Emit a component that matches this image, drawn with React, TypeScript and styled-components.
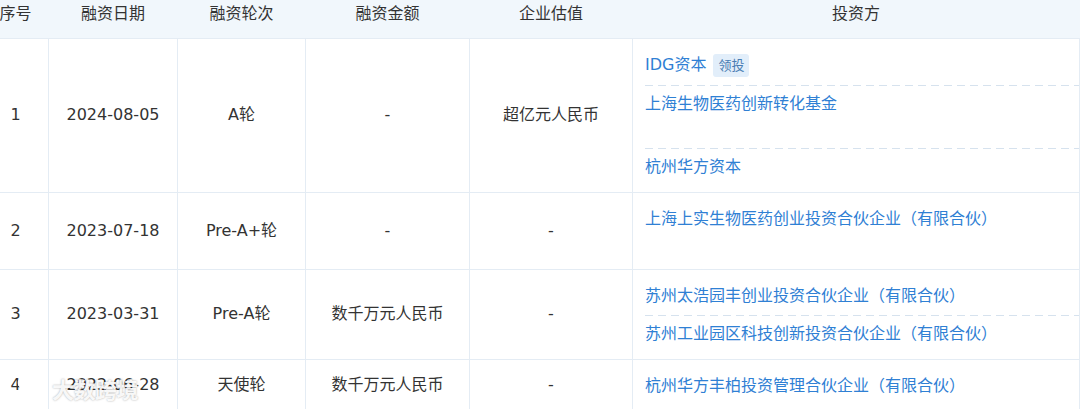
import React, { FC } from "react";
import styled, { createGlobalStyle } from "styled-components";

const GlobalStyle = createGlobalStyle`
  html, body {
    margin: 0;
    padding: 0;
    background: #fff;
  }
  body {
    font-family: "DejaVu Sans", "Noto Sans CJK SC", sans-serif;
    overflow: hidden;
  }
`;

const Page = styled.div`
  position: relative;
  width: 1080px;
  height: 409px;
  overflow: hidden;
`;

const Table = styled.table`
  margin-left: -18px;
  width: 1097px;
  table-layout: fixed;
  border-collapse: collapse;
  font-size: 16px;
  color: #333;
`;

const HeadCell = styled.th`
  box-sizing: border-box;
  height: 38px;
  padding: 3px 0 0;
  vertical-align: top;
  font-weight: normal;
  line-height: 22px;
  text-align: center;
  background: #f1f7fc;
  border-bottom: 1px solid #e4ecf4;
`;

const Cell = styled.td`
  padding: 0;
  text-align: center;
  vertical-align: middle;
  line-height: 22px;
  border: 1px solid #e4ecf4;
`;

const InvestorCell = styled(Cell)`
  padding: 7px 0 6px 12px;
  text-align: left;
`;

const InvestorItem = styled.div<{ $first: boolean }>`
  padding: 8px 0;
  background: ${p =>
    p.$first
      ? "none"
      : "repeating-linear-gradient(to right, #d6e2ee 0 8px, transparent 8px 13px) top left / 100% 1px no-repeat"};
`;

const InvestorLine = styled.div`
  display: flex;
  align-items: center;
  gap: 7px;
  min-height: 22px;
`;

const InvestorName = styled.a`
  color: #2f80d4;
  text-decoration: none;
  white-space: nowrap;
`;

const LeadTag = styled.span`
  display: inline-block;
  height: 23px;
  line-height: 23px;
  padding: 0 5px;
  border-radius: 3px;
  font-size: 13px;
  color: #4a7db3;
  background: #e2eefa;
`;

const EmptyNote = styled.div`
  height: 25px;
`;

const Watermark = styled.div`
  position: absolute;
  left: 4px;
  bottom: 5px;
  display: flex;
  align-items: center;
  gap: 4px;
  color: rgba(255, 255, 255, 0.92);
  font-family: "Noto Sans CJK SC", sans-serif;
  font-size: 22px;
  font-weight: bold;
  letter-spacing: -0.5px;
  text-shadow: 0 0 2px rgba(0, 0, 0, 0.35);
  pointer-events: none;
`;

type Investor = {
  name: string;
  lead?: boolean;
  note?: boolean;
};

type Round = {
  no: number;
  date: string;
  round: string;
  amount: string;
  valuation: string;
  investors: Investor[];
};

const columns = [
  { title: "序号", width: 66 },
  { title: "融资日期", width: 129 },
  { title: "融资轮次", width: 128 },
  { title: "融资金额", width: 164 },
  { title: "企业估值", width: 163 },
  { title: "投资方", width: 447 }
];

const rounds: Round[] = [
  {
    no: 1,
    date: "2024-08-05",
    round: "A轮",
    amount: "-",
    valuation: "超亿元人民币",
    investors: [
      { name: "IDG资本", lead: true },
      { name: "上海生物医药创新转化基金", note: true },
      { name: "杭州华方资本" }
    ]
  },
  {
    no: 2,
    date: "2023-07-18",
    round: "Pre-A+轮",
    amount: "-",
    valuation: "-",
    investors: [{ name: "上海上实生物医药创业投资合伙企业（有限合伙）", note: true }]
  },
  {
    no: 3,
    date: "2023-03-31",
    round: "Pre-A轮",
    amount: "数千万元人民币",
    valuation: "-",
    investors: [
      { name: "苏州太浩园丰创业投资合伙企业（有限合伙）" },
      { name: "苏州工业园区科技创新投资合伙企业（有限合伙）" }
    ]
  },
  {
    no: 4,
    date: "2022-06-28",
    round: "天使轮",
    amount: "数千万元人民币",
    valuation: "-",
    investors: [{ name: "杭州华方丰柏投资管理合伙企业（有限合伙）" }]
  }
];

const App: FC = () => (
  <Page>
    <GlobalStyle />
    <Table>
      <colgroup>
        {columns.map(c => (
          <col key={c.title} style={{ width: c.width }} />
        ))}
      </colgroup>
      <thead>
        <tr>
          {columns.map(c => (
            <HeadCell key={c.title}>{c.title}</HeadCell>
          ))}
        </tr>
      </thead>
      <tbody>
        {rounds.map(r => (
          <tr key={r.no}>
            <Cell>{r.no}</Cell>
            <Cell>{r.date}</Cell>
            <Cell>{r.round}</Cell>
            <Cell>{r.amount}</Cell>
            <Cell>{r.valuation}</Cell>
            <InvestorCell>
              {r.investors.map((inv, i) => (
                <InvestorItem key={inv.name} $first={i === 0}>
                  <InvestorLine>
                    <InvestorName href="#">{inv.name}</InvestorName>
                    {inv.lead ? <LeadTag>领投</LeadTag> : null}
                  </InvestorLine>
                  {inv.note ? <EmptyNote /> : null}
                </InvestorItem>
              ))}
            </InvestorCell>
          </tr>
        ))}
      </tbody>
    </Table>
    {/* site watermark over the bottom-left corner */}
    <Watermark>
      <svg width="44" height="30" viewBox="0 0 44 30" fill="none" stroke="rgba(255,255,255,0.95)" strokeWidth="2.5">
        <path d="M6 6 C2 16 4 26 14 24" />
        <circle cx="20" cy="10" r="5" />
        <circle cx="33" cy="10" r="5" />
      </svg>
      <span>大数跨境</span>
    </Watermark>
  </Page>
);

export default App;
